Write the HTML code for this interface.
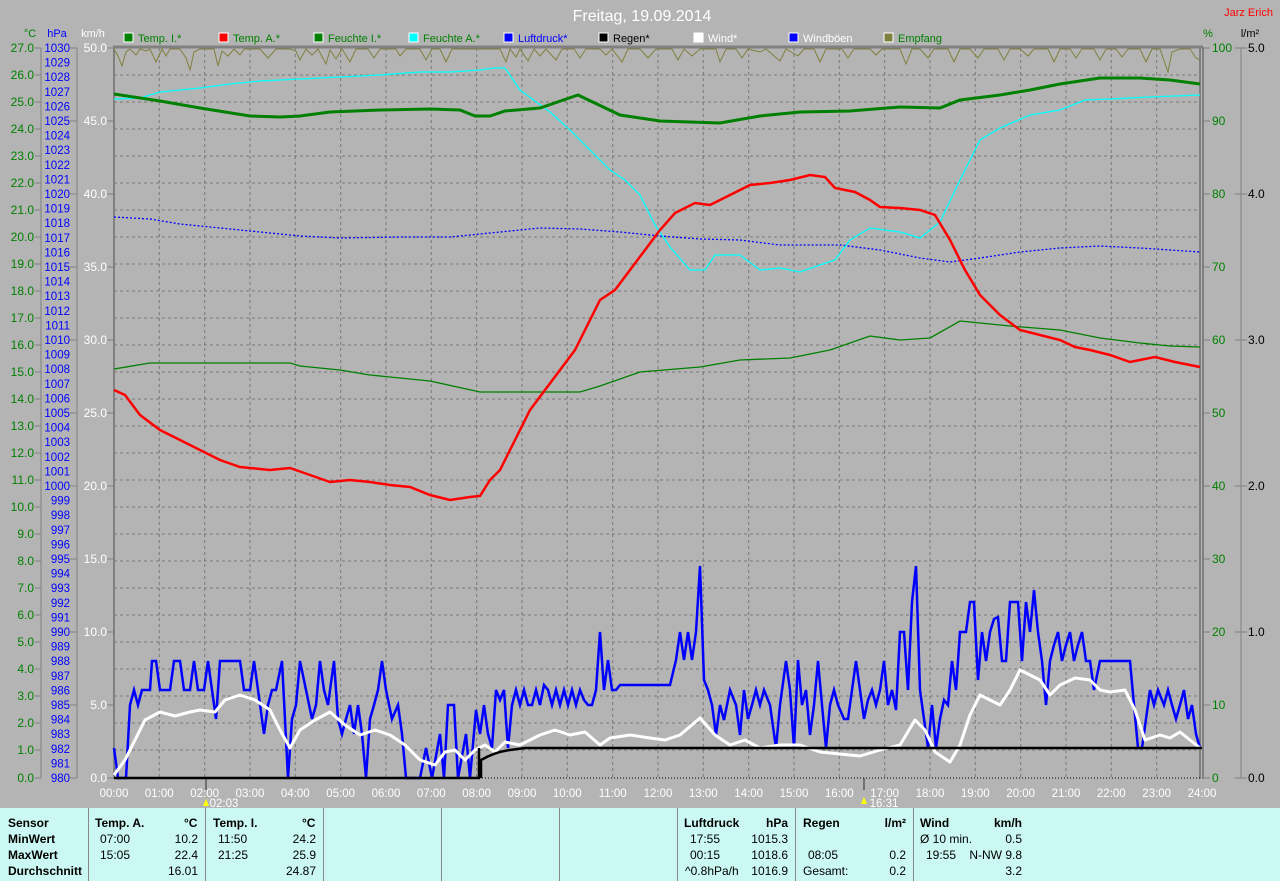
<!DOCTYPE html>
<html><head><meta charset="utf-8"><style>
html,body{margin:0;padding:0;width:1280px;height:881px;overflow:hidden;background:#b4b4b4;font-family:"Liberation Sans",sans-serif}
svg{position:absolute;left:0;top:0}
.tbl{position:absolute;left:0;top:808px;width:1280px;height:73px;background:#ccf8f4;font-size:12px;color:#000}
.c{position:absolute;top:0;height:73px;border-left:1px solid #888}
.t{position:absolute;white-space:nowrap}
.b{font-weight:bold}
</style></head><body>
<svg width="1280" height="808" viewBox="0 0 1280 808" font-family="Liberation Sans, sans-serif" font-size="12">
<text x="642" y="21" fill="#fff" font-size="16" text-anchor="middle">Freitag, 19.09.2014</text>
<text x="1273" y="16" fill="#f00" font-size="11" text-anchor="end">Jarz Erich</text>
<text x="30" y="37" fill="#008000" font-size="11" text-anchor="middle">°C</text>
<text x="57" y="37" fill="#00f" font-size="11" text-anchor="middle">hPa</text>
<text x="93" y="37" fill="#fff" font-size="11" text-anchor="middle">km/h</text>
<text x="1208" y="37" fill="#008000" font-size="11" text-anchor="middle">%</text>
<text x="1250" y="37" fill="#000" font-size="11" text-anchor="middle">l/m²</text>
<!-- legend -->
<g font-size="11">
<rect x="124" y="33" width="9" height="9" fill="#008000" stroke="#fff"/><text x="138" y="42" fill="#008000">Temp. I.*</text>
<rect x="219" y="33" width="9" height="9" fill="#f00" stroke="#fff"/><text x="233" y="42" fill="#008000">Temp. A.*</text>
<rect x="314" y="33" width="9" height="9" fill="#008000" stroke="#fff"/><text x="328" y="42" fill="#008000">Feuchte I.*</text>
<rect x="409" y="33" width="9" height="9" fill="#0ff" stroke="#fff"/><text x="423" y="42" fill="#008000">Feuchte A.*</text>
<rect x="504" y="33" width="9" height="9" fill="#00f" stroke="#fff"/><text x="518" y="42" fill="#00f">Luftdruck*</text>
<rect x="599" y="33" width="9" height="9" fill="#000" stroke="#fff"/><text x="613" y="42" fill="#000">Regen*</text>
<rect x="694" y="33" width="9" height="9" fill="#fff" stroke="#fff"/><text x="708" y="42" fill="#fff">Wind*</text>
<rect x="789" y="33" width="9" height="9" fill="#00f" stroke="#fff"/><text x="803" y="42" fill="#fff">Windböen</text>
<rect x="884" y="33" width="9" height="9" fill="#808040" stroke="#fff"/><text x="898" y="42" fill="#008000">Empfang</text>
</g>
<!-- grid -->
<g stroke="#777" stroke-width="1" stroke-dasharray="3,3">
<path d="M114 75H1200M114 102H1200M114 129H1200M114 156H1200M114 183H1200M114 210H1200M114 237H1200M114 264H1200M114 291H1200M114 318H1200M114 345H1200M114 372H1200M114 399H1200M114 426H1200M114 453H1200M114 480H1200M114 507H1200M114 534H1200M114 561H1200M114 588H1200M114 615H1200M114 642H1200M114 669H1200M114 696H1200M114 723H1200M114 750H1200"/>
<path d="M159.3 48V778M204.7 48V778M250 48V778M295.3 48V778M340.7 48V778M386 48V778M431.3 48V778M476.7 48V778M522 48V778M567.3 48V778M612.7 48V778M658 48V778M703.3 48V778M748.7 48V778M794 48V778M839.3 48V778M884.7 48V778M930 48V778M975.3 48V778M1020.7 48V778M1066 48V778M1111.3 48V778M1156.7 48V778"/>
</g>
<!-- borders -->
<path d="M113 47H1203" stroke="#808080" stroke-width="3"/>
<path d="M114 47V779" stroke="#808080" stroke-width="2"/>
<path d="M1200 47V779M1203 47V779" stroke="#808080" stroke-width="2"/>
<!-- left axes -->
<g stroke="#808080"><path d="M41 48V778M77 48V778"/></g>
<g fill="#008000" text-anchor="end" font-size="12">
<text x="34" y="52">27.0</text><text x="34" y="79">26.0</text><text x="34" y="106">25.0</text><text x="34" y="133">24.0</text><text x="34" y="160">23.0</text><text x="34" y="187">22.0</text><text x="34" y="214">21.0</text><text x="34" y="241">20.0</text><text x="34" y="268">19.0</text><text x="34" y="295">18.0</text><text x="34" y="322">17.0</text><text x="34" y="349">16.0</text><text x="34" y="376">15.0</text><text x="34" y="403">14.0</text><text x="34" y="430">13.0</text><text x="34" y="457">12.0</text><text x="34" y="484">11.0</text><text x="34" y="511">10.0</text><text x="34" y="538">9.0</text><text x="34" y="565">8.0</text><text x="34" y="592">7.0</text><text x="34" y="619">6.0</text><text x="34" y="646">5.0</text><text x="34" y="673">4.0</text><text x="34" y="700">3.0</text><text x="34" y="727">2.0</text><text x="34" y="754">1.0</text><text x="34" y="782">0.0</text>
</g>
<g stroke="#808080"><path d="M35 48H41M35 75H41M35 102H41M35 129H41M35 156H41M35 183H41M35 210H41M35 237H41M35 264H41M35 291H41M35 318H41M35 345H41M35 372H41M35 399H41M35 426H41M35 453H41M35 480H41M35 507H41M35 534H41M35 561H41M35 588H41M35 615H41M35 642H41M35 669H41M35 696H41M35 723H41M35 750H41M35 778H41"/>
<path d="M70 48H77M70 121H77M70 194H77M70 267H77M70 340H77M70 413H77M70 486H77M70 559H77M70 632H77M70 705H77M70 778H77"/>
<path d="M107 48H114M107 121H114M107 194H114M107 267H114M107 340H114M107 413H114M107 486H114M107 559H114M107 632H114M107 705H114M107 778H114"/></g>
<g fill="#00f" text-anchor="end" font-size="11.5" id="hpa"></g>
<g fill="#fff" text-anchor="end" font-size="12">
<text x="107" y="52">50.0</text><text x="107" y="125">45.0</text><text x="107" y="198">40.0</text><text x="107" y="271">35.0</text><text x="107" y="344">30.0</text><text x="107" y="417">25.0</text><text x="107" y="490">20.0</text><text x="107" y="563">15.0</text><text x="107" y="636">10.0</text><text x="107" y="709">5.0</text><text x="107" y="782">0.0</text>
</g>
<!-- right axes -->
<g stroke="#808080"><path d="M1204 48H1210M1204 121H1210M1204 194H1210M1204 267H1210M1204 340H1210M1204 413H1210M1204 486H1210M1204 559H1210M1204 632H1210M1204 705H1210M1204 778H1210"/>
<path d="M1241 48V778M1235 48H1247M1235 194H1247M1235 340H1247M1235 486H1247M1235 632H1247M1235 778H1247"/></g>
<g fill="#008000" font-size="12">
<text x="1212" y="52">100</text><text x="1212" y="125">90</text><text x="1212" y="198">80</text><text x="1212" y="271">70</text><text x="1212" y="344">60</text><text x="1212" y="417">50</text><text x="1212" y="490">40</text><text x="1212" y="563">30</text><text x="1212" y="636">20</text><text x="1212" y="709">10</text><text x="1212" y="782">0</text>
</g>
<g fill="#000" font-size="12">
<text x="1248" y="52">5.0</text><text x="1248" y="198">4.0</text><text x="1248" y="344">3.0</text><text x="1248" y="490">2.0</text><text x="1248" y="636">1.0</text><text x="1248" y="782">0.0</text>
</g>
<!-- time labels -->
<g fill="#fff" text-anchor="middle" font-size="11.5">
<text x="114" y="797">00:00</text><text x="159.3" y="797">01:00</text><text x="204.7" y="797">02:00</text><text x="250" y="797">03:00</text><text x="295.3" y="797">04:00</text><text x="340.7" y="797">05:00</text><text x="386" y="797">06:00</text><text x="431.3" y="797">07:00</text><text x="476.7" y="797">08:00</text><text x="522" y="797">09:00</text><text x="567.3" y="797">10:00</text><text x="612.7" y="797">11:00</text><text x="658" y="797">12:00</text><text x="703.3" y="797">13:00</text><text x="748.7" y="797">14:00</text><text x="794" y="797">15:00</text><text x="839.3" y="797">16:00</text><text x="884.7" y="797">17:00</text><text x="930" y="797">18:00</text><text x="975.3" y="797">19:00</text><text x="1020.7" y="797">20:00</text><text x="1066" y="797">21:00</text><text x="1111.3" y="797">22:00</text><text x="1156.7" y="797">23:00</text><text x="1202" y="797">24:00</text>
<text x="224" y="807">02:03</text><text x="884" y="807">16:31</text>
</g>
<path d="M206 778V790M864 778V790" stroke="#707070" stroke-width="2"/>
<path d="M206 799L209 806H203Z M864 797L867 804H861Z" fill="#ff0"/>
<!-- empfang -->
<polyline fill="none" stroke="#808040" stroke-width="1" points="114,49 118,56 122,66 126,52 130,49 136,55 140,49 146,51 150,49 156,62 162,49 166,56 170,49 180,49 186,58 190,70 194,52 200,49 214,49 218,66 222,51 228,56 234,49 240,55 244,49 260,49 268,58 276,49 290,49 296,51 300,60 306,49 312,55 318,49 326,64 330,50 336,59 342,49 350,62 356,49 368,49 374,58 380,49 396,49 400,56 406,49 420,49 426,60 432,49 440,49 446,62 452,49 470,49 480,49 500,49 506,62 510,49 516,57 520,49 528,61 534,49 540,56 546,49 556,60 562,49 574,49 580,58 586,49 600,49 606,55 612,49 622,62 628,49 640,49 648,58 656,49 672,49 678,60 684,49 692,56 700,49 716,49 720,62 726,49 736,49 742,58 748,49 760,52 766,49 780,61 786,49 798,56 804,49 814,49 820,62 826,49 842,49 848,58 854,49 870,49 876,55 882,49 900,49 906,64 912,49 920,49 928,58 934,49 948,49 954,62 960,49 970,49 978,58 984,49 998,49 1004,60 1010,49 1020,49 1028,56 1034,49 1048,49 1054,62 1060,49 1070,49 1076,58 1082,49 1094,49 1100,60 1106,49 1116,49 1122,57 1128,49 1140,49 1146,62 1152,49 1160,49 1168,72 1172,52 1180,49 1190,49 1196,58 1200,60"/>
<!-- luftdruck -->
<polyline fill="none" stroke="#00f" stroke-width="1.3" stroke-dasharray="2,2" points="114,217 150,219 180,224 220,228 260,232 300,236 340,238 400,237 450,237 500,232 540,228 580,229 620,232 660,236 700,239 740,240 780,245 840,245 880,250 920,258 950,262 980,258 1020,252 1060,248 1100,246 1140,248 1200,252"/>
<!-- feuchte A -->
<polyline fill="none" stroke="#0ff" stroke-width="1.3" points="114,99 140,98 160,92 200,88 230,84 260,81 300,79 340,77 380,75 420,72 450,72 480,70 495,68 505,68 520,90 550,112 570,130 590,150 610,170 625,180 640,195 655,225 670,247 690,270 705,270 715,255 740,255 760,270 780,268 800,272 820,265 835,260 850,240 870,228 900,232 920,238 940,222 960,180 980,140 1000,128 1030,115 1060,110 1085,100 1110,99 1150,97 1200,95"/>
<!-- feuchte I -->
<polyline fill="none" stroke="#008000" stroke-width="1.3" points="114,369 150,363 290,363 300,366 340,370 370,375 430,381 480,392 580,392 600,386 640,372 700,367 740,360 790,358 830,350 870,336 900,340 930,338 960,321 980,323 1010,326 1060,330 1100,338 1140,343 1170,346 1200,347"/>
<!-- temp I -->
<polyline fill="none" stroke="#008000" stroke-width="3" points="114,94 160,101 200,108 250,116 280,117 300,116 330,112 380,110 430,109 460,110 475,116 490,116 505,111 540,108 578,95 620,115 660,121 720,123 760,116 800,112 850,111 900,107 940,108 960,100 1000,95 1030,90 1060,84 1100,78 1140,78 1170,80 1200,84"/>
<!-- temp A -->
<polyline fill="none" stroke="#f00" stroke-width="2.5" points="114,390 125,395 140,415 160,430 180,440 200,450 220,460 240,467 270,470 290,468 310,475 330,482 350,480 370,482 390,485 410,487 430,495 450,500 470,497 480,496 490,480 500,470 510,450 520,430 530,410 545,390 560,370 575,350 585,330 600,300 615,290 630,270 645,250 660,230 675,213 695,203 710,205 730,195 750,185 770,183 790,180 810,175 825,177 835,188 855,192 870,200 880,207 900,208 920,210 935,215 950,240 965,270 980,295 1000,315 1020,330 1040,335 1060,340 1075,347 1090,350 1110,355 1130,362 1155,357 1175,362 1200,367"/>
<!-- gusts -->
<polyline fill="none" stroke="#00f" stroke-width="2.5" stroke-linejoin="miter" points="114,748 118,778 126,778 130,705 134,690 138,705 142,690 150,690 152,661 156,661 160,690 170,690 174,661 180,661 184,690 190,690 194,661 198,690 204,690 208,661 212,690 216,719 220,661 228,661 240,661 244,690 250,690 254,661 258,690 264,734 268,705 272,690 276,690 282,661 288,778 292,719 296,705 300,661 306,690 312,719 316,705 320,661 324,690 328,705 334,661 338,719 342,734 346,719 350,705 354,734 358,705 362,734 366,778 370,719 374,705 378,690 382,661 386,690 392,719 398,705 402,734 406,778 420,778 426,748 432,778 440,734 444,778 448,705 454,705 458,778 466,734 470,778 476,710 480,734 484,705 488,734 492,748 496,690 500,700 504,690 508,748 512,705 516,690 520,705 524,690 528,705 532,705 536,690 540,705 544,685 548,690 552,705 556,690 560,705 564,690 568,705 572,690 576,705 580,690 584,700 588,705 592,705 596,690 600,632 604,690 608,660 612,690 616,690 620,685 670,685 676,660 680,632 684,660 688,632 692,660 696,632 700,566 704,680 708,690 712,705 716,735 720,705 724,720 730,690 736,705 740,735 744,690 748,719 752,705 756,690 760,705 764,690 770,705 776,748 780,705 786,661 790,690 794,748 798,660 802,705 806,690 810,735 814,705 818,661 822,705 826,748 830,705 834,690 838,705 844,719 848,719 852,690 856,661 860,690 864,719 868,700 872,690 876,705 880,690 884,661 888,705 892,690 896,710 900,632 904,632 908,690 912,602 916,566 920,690 924,719 928,748 932,705 936,748 940,719 944,700 948,705 952,661 956,690 960,632 966,632 970,602 974,602 978,680 982,632 986,661 990,632 994,619 998,617 1002,661 1006,661 1010,602 1014,602 1018,602 1022,661 1026,602 1030,632 1034,590 1038,632 1042,661 1046,705 1050,661 1054,645 1058,632 1062,661 1066,645 1070,632 1074,661 1078,645 1082,632 1086,661 1090,661 1094,690 1100,661 1130,661 1134,705 1138,748 1142,748 1146,719 1150,690 1154,705 1158,690 1164,705 1168,690 1172,705 1176,719 1180,705 1184,690 1188,719 1192,705 1196,734 1200,748"/>
<!-- wind -->
<polyline fill="none" stroke="#fff" stroke-width="3" stroke-linejoin="round" points="114,775 125,760 135,740 145,720 160,712 175,716 190,712 200,710 215,712 225,700 240,695 255,700 270,710 280,730 290,748 300,730 315,720 330,712 345,725 360,735 375,730 390,735 405,745 420,760 435,765 445,752 455,750 465,760 475,750 485,745 495,752 505,742 520,745 540,735 555,730 570,735 585,732 600,745 610,738 630,735 650,738 665,740 680,735 700,718 715,735 730,745 745,740 760,748 780,745 800,745 820,752 840,754 860,756 880,750 900,745 915,720 925,730 935,752 950,762 960,745 970,715 980,695 990,700 1000,705 1010,690 1020,670 1030,675 1040,680 1050,695 1060,685 1075,678 1090,680 1100,690 1110,692 1125,690 1135,710 1145,740 1160,735 1170,738 1180,732 1190,740 1200,748"/>
<!-- rain -->
<path d="M114 778H479V748M481 778V760Q495 752 510 750L525 748H1202" fill="none" stroke="#000" stroke-width="2.5"/>
<path d="M482 778H1200" stroke="#000" stroke-width="1" stroke-dasharray="1,2"/>
</svg>
<div class="tbl">
<div class="c" style="left:88px"></div><div class="c" style="left:205px"></div><div class="c" style="left:323px"></div><div class="c" style="left:441px"></div><div class="c" style="left:559px"></div><div class="c" style="left:677px"></div><div class="c" style="left:795px"></div><div class="c" style="left:913px"></div>
<div class="t b" style="left:8px;top:8px">Sensor</div><div class="t b" style="left:8px;top:24px">MinWert</div><div class="t b" style="left:8px;top:40px">MaxWert</div><div class="t b" style="left:8px;top:56px">Durchschnitt</div>
<div class="t b" style="left:95px;top:8px">Temp. A.</div><div class="t b" style="left:184px;top:8px">°C</div>
<div class="t" style="left:100px;top:24px">07:00</div><div class="t" style="right:1082px;top:24px">10.2</div>
<div class="t" style="left:100px;top:40px">15:05</div><div class="t" style="right:1082px;top:40px">22.4</div>
<div class="t" style="right:1082px;top:56px">16.01</div>
<div class="t b" style="left:213px;top:8px">Temp. I.</div><div class="t b" style="left:302px;top:8px">°C</div>
<div class="t" style="left:218px;top:24px">11:50</div><div class="t" style="right:964px;top:24px">24.2</div>
<div class="t" style="left:218px;top:40px">21:25</div><div class="t" style="right:964px;top:40px">25.9</div>
<div class="t" style="right:964px;top:56px">24.87</div>
<div class="t b" style="left:684px;top:8px">Luftdruck</div><div class="t b" style="right:492px;top:8px">hPa</div>
<div class="t" style="left:690px;top:24px">17:55</div><div class="t" style="right:492px;top:24px">1015.3</div>
<div class="t" style="left:690px;top:40px">00:15</div><div class="t" style="right:492px;top:40px">1018.6</div>
<div class="t" style="left:685px;top:56px">^0.8hPa/h</div><div class="t" style="right:492px;top:56px">1016.9</div>
<div class="t b" style="left:803px;top:8px">Regen</div><div class="t b" style="right:374px;top:8px">l/m²</div>
<div class="t" style="left:808px;top:40px">08:05</div><div class="t" style="right:374px;top:40px">0.2</div>
<div class="t" style="left:803px;top:56px">Gesamt:</div><div class="t" style="right:374px;top:56px">0.2</div>
<div class="t b" style="left:920px;top:8px">Wind</div><div class="t b" style="right:258px;top:8px">km/h</div>
<div class="t" style="left:920px;top:24px">Ø 10 min.</div><div class="t" style="right:258px;top:24px">0.5</div>
<div class="t" style="left:926px;top:40px">19:55</div><div class="t" style="right:258px;top:40px">N-NW 9.8</div>
<div class="t" style="right:258px;top:56px">3.2</div>
</div>
<svg width="100" height="800" style="left:0;top:0" font-family="Liberation Sans, sans-serif" font-size="11.5" fill="#00f" text-anchor="end">
<text x="70" y="52">1030</text><text x="70" y="66.6">1029</text><text x="70" y="81.2">1028</text><text x="70" y="95.8">1027</text><text x="70" y="110.4">1026</text><text x="70" y="125">1025</text><text x="70" y="139.6">1024</text><text x="70" y="154.2">1023</text><text x="70" y="168.8">1022</text><text x="70" y="183.4">1021</text><text x="70" y="198">1020</text><text x="70" y="212.6">1019</text><text x="70" y="227.2">1018</text><text x="70" y="241.8">1017</text><text x="70" y="256.4">1016</text><text x="70" y="271">1015</text><text x="70" y="285.6">1014</text><text x="70" y="300.2">1013</text><text x="70" y="314.8">1012</text><text x="70" y="329.4">1011</text><text x="70" y="344">1010</text><text x="70" y="358.6">1009</text><text x="70" y="373.2">1008</text><text x="70" y="387.8">1007</text><text x="70" y="402.4">1006</text><text x="70" y="417">1005</text><text x="70" y="431.6">1004</text><text x="70" y="446.2">1003</text><text x="70" y="460.8">1002</text><text x="70" y="475.4">1001</text><text x="70" y="490">1000</text><text x="70" y="504.6">999</text><text x="70" y="519.2">998</text><text x="70" y="533.8">997</text><text x="70" y="548.4">996</text><text x="70" y="563">995</text><text x="70" y="577.6">994</text><text x="70" y="592.2">993</text><text x="70" y="606.8">992</text><text x="70" y="621.4">991</text><text x="70" y="636">990</text><text x="70" y="650.6">989</text><text x="70" y="665.2">988</text><text x="70" y="679.8">987</text><text x="70" y="694.4">986</text><text x="70" y="709">985</text><text x="70" y="723.6">984</text><text x="70" y="738.2">983</text><text x="70" y="752.8">982</text><text x="70" y="767.4">981</text><text x="70" y="782">980</text>
</svg>
</body></html>
